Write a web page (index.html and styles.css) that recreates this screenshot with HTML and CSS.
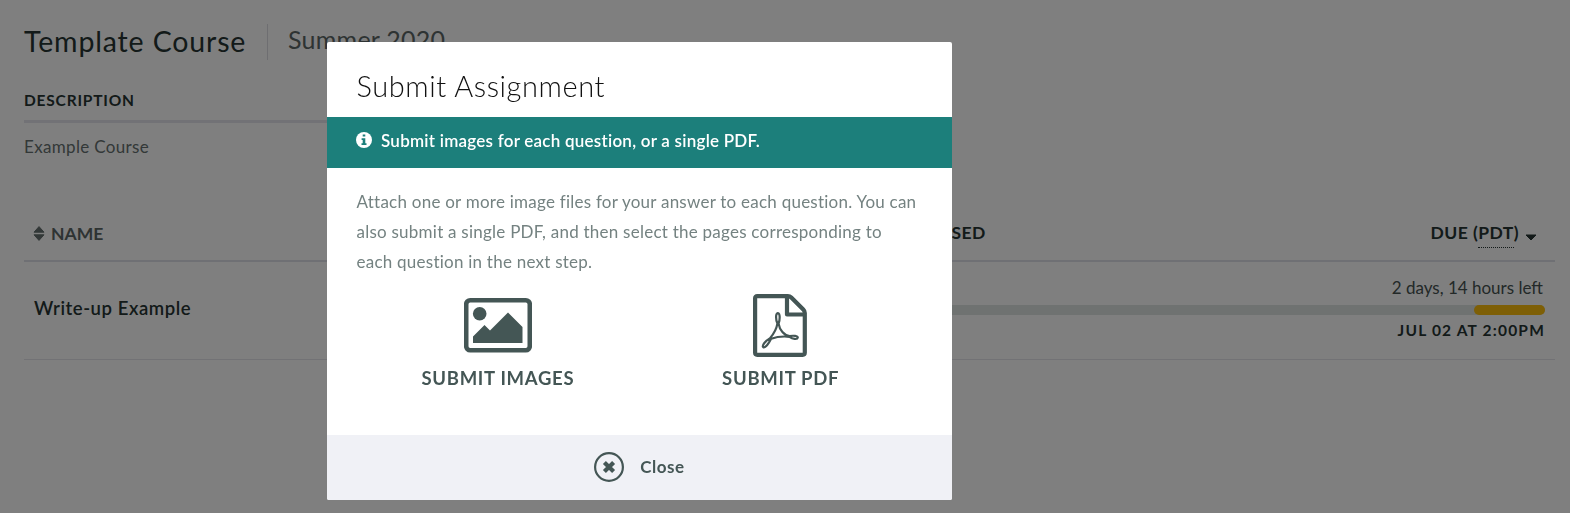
FILE: index.html
```html
<!DOCTYPE html>
<html lang="en">
<head>
<meta charset="utf-8">
<title>Template Course</title>
<link rel="stylesheet" href="styles.css">
</head>
<body>
<main class="page">
  <header class="course-header">
    <h1 class="course-title">Template Course</h1>
    <span class="course-term">Summer 2020</span>
  </header>
  <section class="description">
    <h2 class="description-heading">DESCRIPTION</h2>
    <p class="description-text">Example Course</p>
  </section>
  <section class="assignments">
    <div class="row row-head">
      <div class="col-name">
        <svg class="sort" viewBox="0 0 12 15"><path d="M1 6.2 6 .6l5 5.6zM1 8.8h10L6 14.4z" stroke-linejoin="round" stroke-width="1"/></svg>
        <span>NAME</span>
      </div>
      <div class="col-released">RELEASED</div>
      <div class="col-due">DUE (<span class="zone">PDT</span>)<svg class="caret" viewBox="0 0 12 7"><path d="M1 1h10L6 6z" stroke-linejoin="round" stroke-width="1"/></svg></div>
    </div>
    <div class="row row-item">
      <div class="item-name">Write-up Example</div>
      <div class="item-due">
        <div class="time-left">2 days, 14 hours left</div>
        <div class="progress"><div class="progress-fill"></div></div>
        <div class="due-date">JUL 02 AT 2:00PM</div>
      </div>
    </div>
  </section>
</main>
<div class="overlay">
  <div class="modal" role="dialog">
    <h2 class="modal-title">Submit Assignment</h2>
    <div class="banner">
      <svg class="info" viewBox="0 0 16 16"><circle cx="8" cy="8" r="8" fill="#fff"/><path d="M6.7 2.6h2.6v2H6.7zM5.6 6.3h3.7v4.9h1.2v1.7H5.5v-1.7h1.2V8H5.6z" fill="#1c7f7b"/></svg>
      <span>Submit images for each question, or a single PDF.</span>
    </div>
    <div class="modal-body">
      <p class="instructions">Attach one or more image files for your answer to each question. You can<br>also submit a single PDF, and then select the pages corresponding to<br>each question in the next step.</p>
      <div class="choices">
        <div class="choice">
          <svg class="choice-icon" viewBox="0 0 68 64"><rect x="2.2" y="7.2" width="63.6" height="50" rx="4" fill="none" stroke="#445655" stroke-width="4.6"/><circle cx="15.7" cy="20.8" r="6.8"/><path d="M9 50V43.500L20.500 32l5.500 5.500L44 19.500 58.500 34v16z"/></svg>
          <span>SUBMIT IMAGES</span>
        </div>
        <div class="choice">
          <svg class="choice-icon" viewBox="0 0 68 64"><g fill="none" stroke="#445655" stroke-linejoin="round"><path d="M10.300 3.100h30.500q2 0 3.500 1.500l12 12q1.500 1.500 1.500 3.500v39.500q0 2.200-2.200 2.200H10.300q-2.200 0-2.200-2.200V5.300q0-2.200 2.200-2.200z" stroke-width="4.200"/><path d="M40 4v17.500h17.500" stroke-width="4.200"/><path d="M31.300 31c-1.700-4-2-10.200.4-10.500 2.500-.2 2.200 6.700.8 10.500 1 6.500 5.500 11.800 11 12.500 4-.8 8-.2 8.200 1.500-.4 2.300-5.300 1.500-8.200-.8-6.500-.7-13 0-18.500 2-2.500 5-5.800 9.400-7.800 8.400-1.900-1.500 2.500-6.600 6.800-9.100 3.800-4.500 6.300-8.500 7.300-14.500z" transform="translate(-.9 -.4)" stroke-width="2.200"/></g></svg>
          <span>SUBMIT PDF</span>
        </div>
      </div>
    </div>
    <div class="modal-footer">
      <svg class="close-icon" viewBox="0 0 30 30"><circle cx="15" cy="15" r="13.900" fill="none" stroke="#445655" stroke-width="2.200"/><path d="M10.400 10.400l9.200 9.200M19.600 10.400l-9.200 9.200" stroke="#445655" stroke-width="4.200"/></svg>
      <span class="close-label">Close</span>
    </div>
  </div>
</div>
</body>
</html>
```
FILE: styles.css
```css
* { box-sizing: border-box; }
body {
  margin: 0;
  height: 513px;
  overflow: hidden;
  background: #fff;
  color: #263433;
  font-family: Lato, "Liberation Sans", sans-serif;
}
h1, h2, p { margin: 0; font-weight: 400; }
svg { display: block; flex: none; }

.page { padding: 24px 15px 0 24px; }

.course-header { display: flex; align-items: flex-start; height: 36px; }
.course-title {
  width: 243px;
  font-size: 28.5px;
  line-height: 34px;
  letter-spacing: .85px;
  white-space: nowrap;
}
.course-term {
  height: 36px;
  padding-left: 20px;
  border-left: 1px solid #dcdce2;
  font-size: 25px;
  line-height: 31px;
  letter-spacing: .25px;
  color: #5c6766;
}

.description { width: 740px; padding-top: 30px; }
.description-heading {
  padding-bottom: 10px;
  border-bottom: 3px solid #e4e5ec;
  font-size: 15.5px;
  font-weight: 700;
  line-height: 20px;
  letter-spacing: .8px;
}
.description-text {
  padding-top: 13px;
  font-size: 17px;
  line-height: 21px;
  letter-spacing: .33px;
  color: #667170;
}

.assignments { margin-top: 66px; }
.row { display: grid; grid-template-columns: 873px 293px 1fr; }
.row-head {
  height: 39px;
  border-bottom: 2px solid #dfe0e8;
  font-size: 17.5px;
  font-weight: 700;
  line-height: 20px;
}
.col-name {
  display: flex;
  gap: 6px;
  padding: 1px 0 0 9px;
  color: #5c6766;
}
.sort { width: 12px; height: 15px; margin-top: 2px; fill: #667170; stroke: #667170; }
.col-released { letter-spacing: .4px; }
.col-due {
  display: flex;
  justify-content: flex-end;
  padding-right: 18px;
  letter-spacing: .45px;
  white-space: pre;
}
.zone { height: 25px; border-bottom: 1px dotted #263433; }
.caret { width: 12px; height: 7px; margin: 11px 0 0 6px; fill: #263433; stroke: #263433; }

.row-item { height: 98px; border-bottom: 1px solid #e4e5ea; }
.item-name {
  padding: 36px 0 0 10px;
  font-size: 18.5px;
  font-weight: 600;
  line-height: 20px;
  letter-spacing: .55px;
}
.item-due { grid-column: 2 / 4; padding: 16px 10px 0 0; text-align: right; }
.time-left { padding-right: 2px; font-size: 17px; line-height: 20px; color: #465251; }
.progress {
  display: flex;
  justify-content: flex-end;
  height: 10px;
  margin-top: 7px;
  border-radius: 5px;
  background: #dfe4e2;
}
.progress-fill { width: 71px; border-radius: 5px; background: #fcbe0c; }
.due-date {
  margin-top: 5px;
  font-size: 15.5px;
  font-weight: 700;
  line-height: 20px;
  letter-spacing: 1.2px;
}

.overlay { position: fixed; inset: 0; padding: 42px 0 0 327px; background: rgba(0, 0, 0, .5); }
.modal {
  display: flex;
  flex-direction: column;
  width: 625px;
  height: 457.5px;
  overflow: hidden;
  border-radius: 2px;
  background: #fff;
  color: #445655;
}
.modal-title {
  height: 75px;
  padding: 25px 30px 0 29.5px;
  font-size: 29px;
  font-weight: 300;
  line-height: 38px;
  letter-spacing: .57px;
  color: #111;
}
.banner {
  display: flex;
  gap: 9px;
  height: 50.5px;
  padding: 13px 29px 0;
  background: #1c7f7b;
  color: #fff;
  font-size: 17px;
  font-weight: 600;
  line-height: 21px;
  letter-spacing: .24px;
}
.info { width: 16px; height: 16px; margin-top: 2px; }
.modal-body { flex: 1; padding: 19.5px 30px 0 29.5px; }
.instructions {
  font-size: 17px;
  line-height: 30px;
  letter-spacing: .24px;
  white-space: nowrap;
  color: #748281;
}
.choices { display: grid; grid-template-columns: 1fr 1fr; padding-top: 16px; }
.choice {
  display: flex;
  flex-direction: column;
  align-items: center;
  gap: 10px;
  font-size: 18.5px;
  font-weight: 700;
  line-height: 22px;
  letter-spacing: .7px;
}
.choice-icon { width: 68px; height: 64px; fill: #445655; }
.modal-footer {
  display: flex;
  align-items: center;
  justify-content: center;
  gap: 16px;
  height: 64.5px;
  background: #f0f1f6;
  font-size: 17px;
  font-weight: 700;
  letter-spacing: .5px;
}
.close-label { padding-bottom: 2px; }
.close-icon { width: 30px; height: 30px; }
```
